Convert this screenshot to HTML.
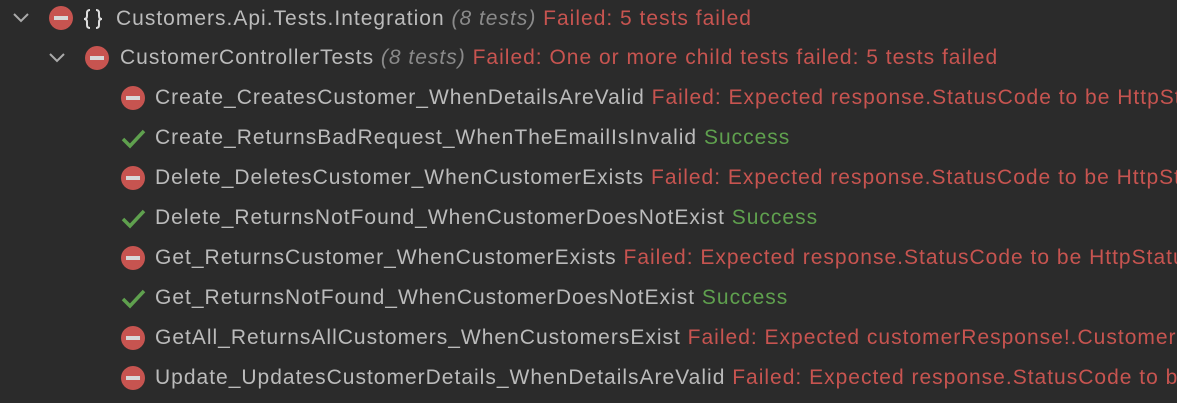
<!DOCTYPE html>
<html><head><meta charset="utf-8"><style>
body{margin:0;width:1177px;height:403px;background:#2b2b2b;overflow:hidden;font-family:"Liberation Sans",sans-serif;font-size:21px;letter-spacing:1px;color:#bbbbbb}
.r{position:absolute;height:40px;line-height:40px;white-space:nowrap;left:0;width:1177px;overflow:hidden}
.t{position:absolute;top:0}
.red{color:#c75450}.grn{color:#5fa04e}.g{color:#8a8a8a;font-style:italic}
.ic{position:absolute;width:24px;height:24px;border-radius:50%;background:#c75450;top:8px}
.ic:after{content:"";position:absolute;left:5px;right:5px;top:10px;height:4px;background:#d8d8d8}
.chk{position:absolute;top:8px}
.chev{position:absolute;top:12px}
</style></head><body>
<div class="r" style="top:-2px">
<svg class="chev" style="left:12px" width="18" height="16"><path d="M2 4 L9 11 L16 4" stroke="#aaa" stroke-width="2" fill="none"/></svg>
<div class="ic" style="left:49px"></div>
<svg style="position:absolute;left:82px;top:10px" width="22" height="22"><path d="M8 2 Q5 2 5 5 L5 8 Q5 11 2 11 Q5 11 5 14 L5 17 Q5 20 8 20 M14 2 Q17 2 17 5 L17 8 Q17 11 20 11 Q17 11 17 14 L17 17 Q17 20 14 20" stroke="#ddd" stroke-width="2" fill="none"/></svg>
<span class="t" style="left:116px;top:1px">Customers.Api.Tests.Integration <span class="g">(8 tests)</span> <span class="red">Failed: 5 tests failed</span></span></div>
<div class="r" style="top:38px">
<svg class="chev" style="left:48px" width="18" height="16"><path d="M2 4 L9 11 L16 4" stroke="#aaa" stroke-width="2" fill="none"/></svg>
<div class="ic" style="left:85px"></div>
<span class="t" style="left:120px">CustomerControllerTests <span class="g">(8 tests)</span> <span class="red">Failed: One or more child tests failed: 5 tests failed</span></span></div>

<div class="r" style="top:78px"><div class="ic" style="left:121px"></div><span class="t" style="left:155px">Create_CreatesCustomer_WhenDetailsAreValid <span class="red">Failed: Expected response.StatusCode to be HttpStatusCode.Created</span></span></div>
<div class="r" style="top:118px"><svg class="chk" style="left:121px" width="26" height="24"><path d="M2 13 L9 20 L23 5" stroke="#5fa04e" stroke-width="3.5" fill="none"/></svg><span class="t" style="left:155px">Create_ReturnsBadRequest_WhenTheEmailIsInvalid <span class="grn">Success</span></span></div>
<div class="r" style="top:158px"><div class="ic" style="left:121px"></div><span class="t" style="left:155px">Delete_DeletesCustomer_WhenCustomerExists <span class="red">Failed: Expected response.StatusCode to be HttpStatusCode.OK</span></span></div>
<div class="r" style="top:198px"><svg class="chk" style="left:121px" width="26" height="24"><path d="M2 13 L9 20 L23 5" stroke="#5fa04e" stroke-width="3.5" fill="none"/></svg><span class="t" style="left:155px">Delete_ReturnsNotFound_WhenCustomerDoesNotExist <span class="grn">Success</span></span></div>
<div class="r" style="top:238px"><div class="ic" style="left:121px"></div><span class="t" style="left:155px">Get_ReturnsCustomer_WhenCustomerExists <span class="red">Failed: Expected response.StatusCode to be HttpStatusCode.OK</span></span></div>
<div class="r" style="top:278px"><svg class="chk" style="left:121px" width="26" height="24"><path d="M2 13 L9 20 L23 5" stroke="#5fa04e" stroke-width="3.5" fill="none"/></svg><span class="t" style="left:155px">Get_ReturnsNotFound_WhenCustomerDoesNotExist <span class="grn">Success</span></span></div>
<div class="r" style="top:318px"><div class="ic" style="left:121px"></div><span class="t" style="left:155px">GetAll_ReturnsAllCustomers_WhenCustomersExist <span class="red">Failed: Expected customerResponse!.Customers to contain</span></span></div>
<div class="r" style="top:358px"><div class="ic" style="left:121px"></div><span class="t" style="left:155px">Update_UpdatesCustomerDetails_WhenDetailsAreValid <span class="red">Failed: Expected response.StatusCode to be HttpStatusCode.OK</span></span></div>
</body></html>
